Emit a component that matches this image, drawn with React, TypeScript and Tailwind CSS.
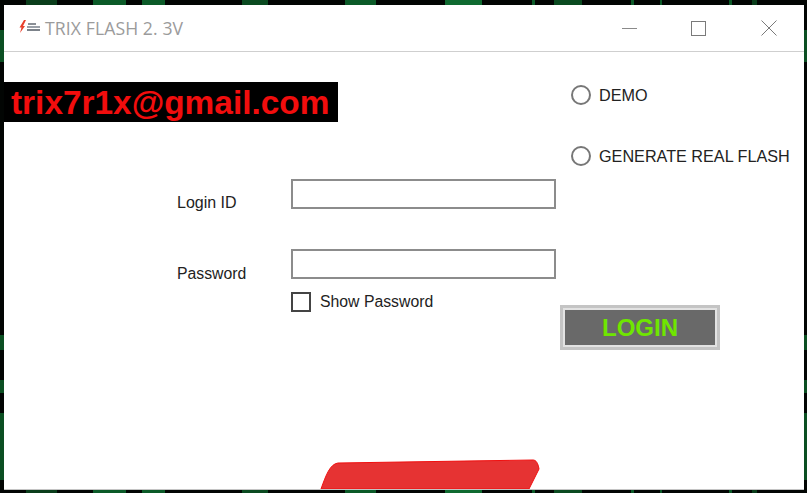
const Radio = ({ label }: { label: string }) => (
  <label className="flex items-center h-5">
    <span className="w-5 h-5 rounded-full border-2 border-[#777] bg-white shrink-0" />
    <span className="ml-[8px] text-[16.2px] leading-5 text-[#222] whitespace-nowrap [font-family:'Liberation_Sans',sans-serif]">{label}</span>
  </label>
);

const TextBox = () => (
  <div className="w-[265px] h-[30px] border-2 border-[#8c8c8c] bg-white" />
);

const App = () => {
  return (
    <div className="w-[807px] h-[493px] overflow-hidden pt-[5px] pl-1 bg-[#020503] bg-[linear-gradient(180deg,transparent_30px,#0b4f22_30px,#0b4f22_62px,transparent_62px,transparent_335px,#0b4f22_335px,#0b4f22_350px,transparent_350px,transparent_380px,#0b4f22_380px,#0b4f22_393px,transparent_393px,transparent_413px,#0b4f22_413px,#0b4f22_480px,transparent_480px),linear-gradient(90deg,transparent_26px,#0a3d1b_26px,#0a3d1b_57px,transparent_57px,transparent_93px,#0b5a28_93px,#0b5a28_126px,transparent_126px,transparent_142px,#0b5a28_142px,#0b5a28_165px,transparent_165px,transparent_242px,#0a4a20_242px,#0a4a20_268px,transparent_268px,transparent_345px,#0b5a28_345px,#0b5a28_376px,transparent_376px,transparent_445px,#0f6a30_445px,#0f6a30_482px,transparent_482px,transparent_532px,#0b5a28_532px,#0b5a28_535px,transparent_535px,transparent_554px,#0a4a20_554px,#0a4a20_582px,transparent_582px,transparent_631px,#0b5a28_631px,#0b5a28_634px,transparent_634px,transparent_660px,#0b5a28_660px,#0b5a28_662px,transparent_662px,transparent_729px,#0b5a28_729px,#0b5a28_732px,transparent_732px,transparent_752px,#0a3d1b_752px,#0a3d1b_757px,transparent_757px)]">
      <div className="w-[800px] h-[485px] bg-white border-b border-[#c4c4c4] flex flex-col">
        {/* title bar */}
        <div className="h-[47px] shrink-0 border-b border-[#cfcfcf] flex items-center">
          <svg width="24" height="14" viewBox="0 0 24 14" className="ml-[14px] mt-[-2px] blur-[0.4px]">
            <path d="M6 0 L8 0 L5 6 L7 6 L2 13 L3.5 7.5 L1.5 7.5 Z" fill="#e8402c" />
            <rect x="10" y="3" width="8" height="2" fill="#8a8f96" />
            <rect x="9" y="6" width="13" height="2" fill="#9aa0a8" />
            <rect x="9" y="9" width="13" height="2" fill="#7c828a" />
          </svg>
          <span className="ml-[3px] text-[17.6px] tracking-[0.1px] text-[#9b9b9b] [font-family:'Open_Sans',sans-serif]">TRIX FLASH 2. 3V</span>
          <div className="ml-auto flex items-center">
            <div className="w-[15px] h-px bg-[#8a8a8a]" />
            <div className="ml-[54px] w-[15px] h-[15px] border border-[#7a7a7a]" />
            <svg width="16" height="16" viewBox="0 0 16 16" className="ml-[55px] mr-[27px]">
              <path d="M0.5 0.5 L15.5 15.5 M15.5 0.5 L0.5 15.5" stroke="#7a7a7a" strokeWidth="1" fill="none" />
            </svg>
          </div>
        </div>

        <div className="flex-1 flex min-h-0">
          {/* left column */}
          <div className="w-[552px] shrink-0 flex flex-col pt-[30px]">
            <div className="w-[334px] h-10 bg-black pl-[7px] text-[#f20d0d] font-bold text-[33.4px] leading-[42px] whitespace-nowrap [font-family:'Liberation_Sans',sans-serif]">
              trix7r1x@gmail.com
            </div>
            <div className="mt-[57px] flex items-start text-[16px] text-[#222] [font-family:'Liberation_Sans',sans-serif]">
              <span className="ml-[173px] w-[114px] mt-[14px] leading-5">Login ID</span>
              <TextBox />
            </div>
            <div className="mt-[36px] flex items-start text-[15.8px] text-[#222] [font-family:'Liberation_Sans',sans-serif]">
              <span className="ml-[173px] w-[114px] mt-[15px] leading-5">Password</span>
              <TextBox />
            </div>
            <label className="mt-[8px] ml-[287px] flex items-center">
              <span className="w-5 h-5 border-2 border-[#444] bg-white shrink-0" />
              <span className="ml-[9px] text-[15.8px] leading-5 text-[#222] [font-family:'Liberation_Sans',sans-serif]">Show Password</span>
            </label>
            <svg width="220" height="30" viewBox="0 0 220 30" className="mt-auto ml-[316px] block shrink-0">
              <path d="M1 30 C6 16 10 5 18 4 L213 1 C216 1 218 4 219 10 L209 30 Z" fill="#e63333" stroke="#f01010" strokeWidth="1" />
            </svg>
          </div>

          {/* right column */}
          <div className="flex-1 flex flex-col pt-[33px]">
            <div className="pl-[15px] flex flex-col gap-[41px]">
              <Radio label="DEMO" />
              <Radio label="GENERATE REAL FLASH" />
            </div>
            <button className="mt-[139px] ml-1 w-[160px] h-[45px] border-[3px] border-[#c4c4c4] bg-[#e2e2e2] p-[2px]">
              <span className="flex items-center justify-center w-full h-full bg-[#696969] text-[#6fe600] font-bold text-[24px] [font-family:'Liberation_Sans',sans-serif]">
                LOGIN
              </span>
            </button>
          </div>
        </div>
      </div>
    </div>
  );
};

export default App;
